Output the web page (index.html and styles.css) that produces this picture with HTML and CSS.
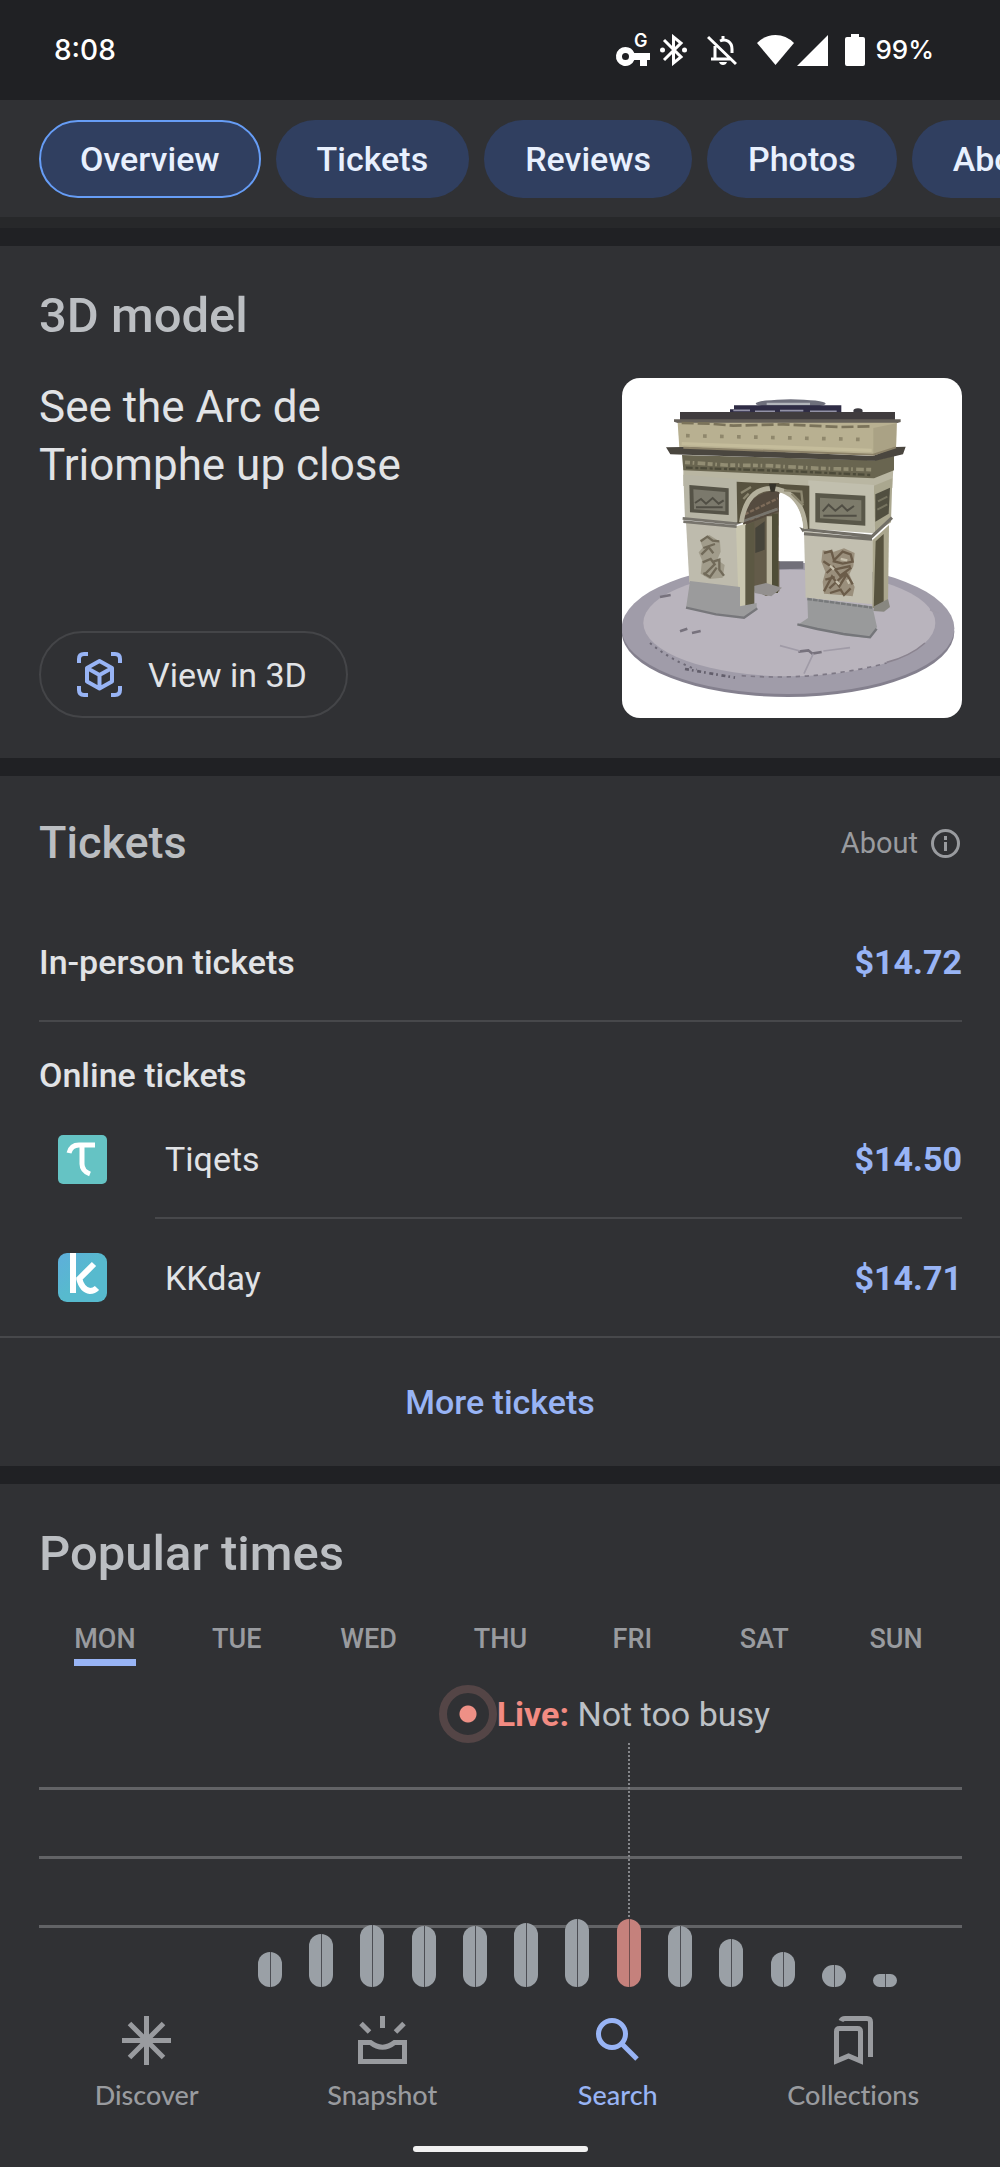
FILE: index.html
```html
<!DOCTYPE html>
<html lang="en">
<head>
    <meta charset="UTF-8">
    <meta name="viewport" content="width=device-width, initial-scale=1.0">
    <title>Arc de Triomphe</title>
    <link rel="stylesheet" href="styles.css">
</head>
<body>

    <header class="status-bar">
        <span class="clock">8:08</span>
        <div class="status-icons">
            <div class="status-group">
                <svg class="key-icon" width="34" height="32" viewBox="0 0 34 32" fill="#fff">
                    <path fill-rule="evenodd" d="M9.500 13a9.500 9.500 0 1 0 8.800 13H24v6h7v-6h3v-7H18.300A9.500 9.500 0 0 0 9.500 13zm0 6a3.500 3.500 0 1 1 0 7 3.500 3.500 0 0 1 0-7z"/>
                    <text x="18" y="13" class="key-letter">G</text>
                </svg>
                <svg width="27" height="32" viewBox="0 0 27 32" fill="none" stroke="#fff" stroke-width="3">
                    <path d="M4 6l17 17-7.500 6V3L21 9 4 26"/>
                    <circle cx="2.500" cy="16" r="2.500" fill="#fff" stroke="none"/>
                    <circle cx="24.500" cy="16" r="2.500" fill="#fff" stroke="none"/>
                </svg>
            </div>
            <svg width="30" height="32" viewBox="0 0 30 32" fill="none" stroke="#fff" stroke-width="3">
                <path d="M1 3l28 27M4 25h20M8 24V12M13 7c6-3 12 1 12 8v4M16 2v4"/>
                <path d="M12 28h8q-1 3-4 3t-4-3z" fill="#fff" stroke="none"/>
            </svg>
            <div class="status-group signal">
                <svg width="37" height="32" viewBox="0 0 37 32" fill="#fff">
                    <path d="M18.500 31L0 9Q8 1 18.500 1T37 9z"/>
                </svg>
                <svg width="31" height="32" viewBox="0 0 31 32" fill="#fff">
                    <path d="M31 1v31H0z"/>
                </svg>
            </div>
            <div class="status-group">
                <svg width="20" height="32" viewBox="0 0 20 32" fill="#fff">
                    <path d="M6 0h8v3h4q2 0 2 2v25q0 2-2 2H2q-2 0-2-2V5q0-2 2-2h4z"/>
                </svg>
                <span class="battery">99%</span>
            </div>
        </div>
    </header>

    <nav class="chips">
        <a href="#overview" class="chip active">Overview</a>
        <a href="#tickets" class="chip">Tickets</a>
        <a href="#reviews" class="chip">Reviews</a>
        <a href="#photos" class="chip">Photos</a>
        <a href="#about" class="chip">About</a>
    </nav>

    <main>
        <section class="card" id="overview">
            <h2>3D model</h2>
            <div class="model">
                <div class="model-info">
                    <p>See the Arc de Triomphe up close</p>
                    <button class="view-button">
                        <svg width="45" height="45" viewBox="0 0 45 45" fill="none" stroke="#98b4f5" stroke-width="4">
                            <path d="M2 11V7q0-5 5-5h4M34 2h4q5 0 5 5v4M43 34v4q0 5-5 5h-4M11 43H7q-5 0-5-5v-4"/>
                            <path d="M22.500 9l12.500 7v13.500l-12.500 7L10 29.500V16zM10 16l12.500 7L35 16M22.500 23v13" stroke-linejoin="round"/>
                        </svg>
                        View in 3D
                    </button>
                </div>
                <svg class="model-picture" viewBox="66 55 1020 1020" role="img" aria-label="Arc de Triomphe">
                    <!-- round base -->
                    <ellipse cx="564" cy="816" rx="499" ry="196" fill="#84808e"/>
                    <ellipse cx="564" cy="806" rx="499" ry="197" fill="#a09ca9"/>
                    <ellipse cx="568" cy="790" rx="438" ry="160" fill="#b9b4bd"/>
                    <path d="M150 850Q210 900 290 930" fill="none" stroke="#6d6976" stroke-width="6" stroke-dasharray="7 13"/>
                    <path d="M255 928l150 26" fill="none" stroke="#625e6b" stroke-width="8" stroke-dasharray="12 9 5 11"/>
                    <path d="M425 948Q650 965 860 910" fill="none" stroke="#7d7885" stroke-width="5" stroke-dasharray="13 14"/>
                    <path d="M860 908Q930 890 975 850" fill="none" stroke="#8b8490" stroke-width="5"/>
                    <path d="M240 815l22-8M276 820l26-6M180 712l32-6M595 876l30-4 12 10 28-5" stroke="#77727d" stroke-width="8" fill="none"/>
                    <path d="M640 882l-28 60M540 858l60 16M670 874l80-10M990 750l26 10" stroke="#a09ba7" stroke-width="5" fill="none"/>
                    <path d="M535 605h75v22l-75 2z" fill="#716f79"/>
                    <!-- roof -->
                    <ellipse cx="572" cy="132" rx="105" ry="13" fill="#6e6f7c"/>
                    <path d="M500 133h130" stroke="#b2b5bb" stroke-width="7"/>
                    <path d="M402 137h322v22H390v-10h12z" fill="#2f2c45"/>
                    <path d="M400 152h50M465 155h60M540 153h70M630 155h80" stroke="#9291a6" stroke-width="5"/>
                    <ellipse cx="774" cy="154" rx="14" ry="8" fill="#3c3a40"/>
                    <path d="M240 157h645v24H240z" fill="#403c3e"/>
                    <path d="M222 179h680v8l-12 4H235l-13-5z" fill="#66615a"/>
                    <!-- attic -->
                    <path d="M233 189h657l-2 78-68 20-582-22z" fill="#b8b091"/>
                    <path d="M820 205l70-14-2 76-68 20z" fill="#aaa285"/>
                    <path d="M245 190l85 2 70 6 150-4 170 8 100-2" fill="none" stroke="#7b735a" stroke-width="8" stroke-dasharray="36 12"/>
                    <path d="M258 228l560 12" stroke="#8f876c" stroke-width="11" stroke-dasharray="11 40"/>
                    <path d="M245 252l570 20" stroke="#c4bc9b" stroke-width="10"/>
                    <!-- main wall -->
                    <path d="M250 325l572 26 58-26-3 60-55 34-572-40z" fill="#b9b6a2"/>
                    <!-- cornice and frieze -->
                    <path d="M246 286l578 16 58-14v44l-60 24-572-24z" fill="#696550"/>
                    <path d="M255 308l120 8 130 2 150 8 160 4" fill="none" stroke="#928d73" stroke-width="11" stroke-dasharray="15 8 5 10 23 7"/>
                    <path d="M258 324l300 10 255 12" fill="none" stroke="#4c4a39" stroke-width="7" stroke-dasharray="20 8 9 6"/>
                    <path d="M198 263l50-1 180 9 390 18 70-27 29-1-8 23-82 19-386-12-230-7z" fill="#4a463f"/>
                    <path d="M250 264l570 21 68-22" fill="none" stroke="#8b8168" stroke-width="6"/>
                    <!-- inside of the arch -->
                    <path d="M410 370h128v325l-40 14-38-20z" fill="#635b49"/>
                    <path d="M428 480Q438 400 538 390v65l-106 42z" fill="#554b3f"/>
                    <path d="M434 464l100-48M450 480l85-34" stroke="#7d6b59" stroke-width="7" stroke-dasharray="13 5"/>
                    <path d="M500 470h16v228h-16z" fill="#b9b49e"/>
                    <path d="M516 462h18v238h-18z" fill="#4f4d37"/>
                    <path d="M466 505l28-20v85l-28 10z" fill="#46443a"/>
                    <path d="M458 680l40-10 48 14-32 26-50-10z" fill="#93908f"/>
                    <!-- left pier -->
                    <path d="M250 345l163 14v131l-158-10z" fill="#b7b5a5"/>
                    <path d="M258 486l172 18v238l-162-74z" fill="#bebbad"/>
                    <path d="M408 500l30-8v248h-22z" fill="#cac7b0"/>
                    <path d="M436 497l27-10v258h-27z" fill="#5c5843"/>
                    <path d="M270 664l150 18v58l50-10v22l-32 21-90-9-90-18z" fill="#9b9b9c"/>
                    <path d="M258 744l90 20 84 10 40-28" fill="none" stroke="#77777b" stroke-width="7"/>
                    <path d="M248 476l160 16 125-44M250 486l160 15" fill="none" stroke="#77746c" stroke-width="8"/>
                    <path d="M268 376l118 10v80l-116-8z" fill="#555347"/>
                    <path d="M280 389l96 8v58l-94-6z" fill="#7b796c"/>
                    <path d="M285 430l18-12 15 14 20-17 18 17 15-10M288 443h80" fill="none" stroke="#504e44" stroke-width="6"/>
                    <path d="M300 540l28-14 32 20 2 30-10 24 22 16-6 38-40 4-26-16 4-40-10-24 12-14z" fill="#a19c8b"/>
                    <path d="M302 545l20-14 16 12 20 2M310 565l35-12M304 585l22-22 14 18M308 608l24-10 12 16-32 32M340 606l18-6v30l14 18M310 640l20 12 20-28" fill="none" stroke="#716a59" stroke-width="7"/>
                    <!-- right pier -->
                    <path d="M625 362l197 14v145l-200-14z" fill="#c1bfae"/>
                    <path d="M822 378l55-22-4 132-50 33z" fill="#aaa78f"/>
                    <path d="M612 514l205 24v196l-200-20z" fill="#c2bfb0"/>
                    <path d="M817 542l50-46-3 240-47 10z" fill="#aaa68d"/>
                    <path d="M827 545l24-22v214l-30 8z" fill="#57533f"/>
                    <path d="M822 740l42-22 6 24-18 14-32-2z" fill="#888780"/>
                    <path d="M622 714l195 26 14 62-22 33-65-6-150-34 30-20z" fill="#999a9b"/>
                    <path d="M592 794l60 14 78 15 80 10 20-26" fill="none" stroke="#75767a" stroke-width="7"/>
                    <path d="M622 718l195 26" stroke="#77797b" stroke-width="7" stroke-dasharray="14 3"/>
                    <path d="M598 508l218 22 60-56M612 522l204 17" fill="none" stroke="#726f67" stroke-width="9"/>
                    <path d="M646 400l150 8v90l-150-10z" fill="#595749"/>
                    <path d="M660 414l124 8v62l-124-8z" fill="#7d7b6b"/>
                    <path d="M668 455l18-20 20 18 20-16 16 16 20-14M670 468h100" fill="none" stroke="#504e44" stroke-width="6"/>
                    <path d="M826 404l44-20-4 78-40 24z" fill="#514f40"/>
                    <path d="M834 425l28-14M832 450l30-16" stroke="#777460" stroke-width="6"/>
                    <path d="M668 572l34 4 30-10 32 14-4 40-12 24 16 38-6 28-36-4-50-4-4-36 8-30-12-30z" fill="#9a8f7c"/>
                    <path d="M672 580l22-6 8 28 26-26 24 8 6 22-30 6-30-8M670 605l36 24 46-10M680 640l20-18 20 26 34-24M676 660l28-8M672 695l24-45 22 30 22-36 18 30M690 700l32-10 10 16 20-20M738 640l-50 46" fill="none" stroke="#6b5c49" stroke-width="7"/>
                    <path d="M690 618l12 12M722 598l20 4M708 664l10 10M742 660l6 12" stroke="#c7c0ad" stroke-width="7"/>
                    <!-- arch ring -->
                    <path d="M410 366l218 12v130h-16Q608 400 520 390 440 390 422 490h-10z" fill="#57523f"/>
                    <path d="M424 488Q440 384 518 386 608 396 617 508" fill="none" stroke="#b4b09c" stroke-width="14"/>
                    <path d="M423 400l30-18M552 392l52 4 4 35M430 418l16-16M575 402l35 35" stroke="#8c8770" stroke-width="7" fill="none"/>
                    <path d="M537 403Q598 415 609 500v104h-73z" fill="#fff"/>
                    <path d="M507 372h22l-5 24h-12z" fill="#36332a"/>
                    <path d="M598 502l20 8-10 8z" fill="#706d65"/>
                </svg>
            </div>
        </section>

        <section class="card" id="tickets">
            <div class="tickets-header">
                <h2>Tickets</h2>
                <a href="#about" class="about-link">
                    About
                    <svg width="29" height="29" viewBox="0 0 29 29" fill="none" stroke="currentColor" stroke-width="3">
                        <circle cx="14.500" cy="14.500" r="13"/>
                        <path d="M14.500 13v9M14.500 7v4"/>
                    </svg>
                </a>
            </div>
            <a href="#in-person" class="ticket-row in-person">
                <span class="ticket-type">In-person tickets</span>
                <span class="price">$14.72</span>
            </a>
            <h3>Online tickets</h3>
            <a href="#tiqets" class="ticket-row">
                <svg class="logo" width="49" height="49" viewBox="0 0 49 49">
                    <rect width="49" height="49" rx="5" fill="#65c3c4"/>
                    <path d="M11 18q2-8 10-8h16M24 10v19q0 7 8 10" fill="none" stroke="#fff" stroke-width="5"/>
                </svg>
                <span class="seller divided">Tiqets <span class="price">$14.50</span></span>
            </a>
            <a href="#kkday" class="ticket-row">
                <svg class="logo" width="49" height="49" viewBox="0 0 49 49">
                    <defs>
                        <linearGradient id="kkday-fill" x1="0" y1="0" x2="1" y2="1">
                            <stop offset="0" stop-color="#5eaedb"/>
                            <stop offset="0.500" stop-color="#57bace"/>
                        </linearGradient>
                    </defs>
                    <rect width="49" height="49" rx="9" fill="url(#kkday-fill)"/>
                    <path d="M15 0v40" stroke="#fff" stroke-width="6"/>
                    <path d="M36 11L20 27M21 25q3 12 11 13 4 0 7-3" fill="none" stroke="#fff" stroke-width="6"/>
                </svg>
                <span class="seller">KKday <span class="price">$14.71</span></span>
            </a>
            <a href="#more-tickets" class="more-tickets">More tickets</a>
        </section>

        <section class="card popular">
            <h2>Popular times</h2>
            <div class="days">
                <button class="day selected">MON</button>
                <button class="day">TUE</button>
                <button class="day">WED</button>
                <button class="day">THU</button>
                <button class="day">FRI</button>
                <button class="day">SAT</button>
                <button class="day">SUN</button>
            </div>
            <p class="live">
                <span class="live-dot"></span>
                <span><strong>Live:</strong> Not too busy</span>
            </p>
            <div class="chart" id="chart"></div>
        </section>
    </main>

    <footer class="bottom">
        <nav class="bottom-nav">
            <a href="#discover" class="nav-item">
                <svg width="49" height="49" viewBox="0 0 49 49" fill="none" stroke="currentColor" stroke-width="5">
                    <path d="M24.500 0v49M0 24.500h49M7.500 7.500l34 34M41.500 7.500l-34 34"/>
                </svg>
                Discover
            </a>
            <a href="#snapshot" class="nav-item">
                <svg width="49" height="49" viewBox="0 0 49 49" fill="none" stroke="currentColor" stroke-width="5">
                    <path d="M24.500 0v12M3 7.500l8.500 8.500M46 7.500L37.500 16M2.500 26.500h10q12 9.500 24 0h10v19h-44z"/>
                </svg>
                Snapshot
            </a>
            <a href="#search" class="nav-item current">
                <svg width="49" height="49" viewBox="0 0 49 49" fill="none" stroke="currentColor" stroke-width="5">
                    <circle cx="19" cy="18" r="13.500"/>
                    <path d="M28 27l16 16"/>
                </svg>
                Search
            </a>
            <a href="#collections" class="nav-item">
                <svg width="49" height="49" viewBox="0 0 49 49" fill="none" stroke="currentColor" stroke-width="5">
                    <path d="M7.500 45V15.500q0-3 3-3h18q3 0 3 3V45l-12-5z"/>
                    <path d="M12 5q1-2.500 4-2.500h22q3.500 0 3.500 3.500v35"/>
                </svg>
                Collections
            </a>
        </nav>
        <div class="home-bar"></div>
    </footer>

    <script>
        // Busyness per hour, 0 = closed
        const hours = [0, 0, 0, 0, 35, 53, 62, 61, 61, 64, 68, 68, 61, 48, 35, 22, 13, 0];
        const liveHour = 11;

        const chart = document.getElementById("chart");
        hours.forEach((value, index) => {
            let live = index === liveHour ? " live-hour" : "";
            chart.innerHTML += `<div class="hour${live}"><div class="bar" style="height: ${value}px"></div></div>`;
        });
    </script>

</body>
</html>
```
FILE: styles.css
```css
* {
    box-sizing: border-box;
}
body {
    display: flex;
    flex-direction: column;
    min-height: 100vh;
    margin: 0;
    background-color: #202124;
    color: #e1e3e6;
    font-family: Roboto, sans-serif;
    font-size: 34px;
    line-height: 44px;
}
svg {
    display: block;
    flex-shrink: 0;
}
a {
    color: inherit;
    text-decoration: none;
}
button {
    background: none;
    border: none;
    color: inherit;
    font: inherit;
}
h2, h3, p {
    margin: 0;
}
h2 {
    color: #bbbec2;
    font-size: 49px;
    font-weight: 500;
    line-height: 56px;
}
h3 {
    padding: 31px 0 3px;
    font-size: 34px;
    font-weight: 500;
}

/* Status bar */
.status-bar {
    display: flex;
    align-items: center;
    justify-content: space-between;
    height: 100px;
    padding: 0 66px 0 54px;
    color: #fff;
    font-family: Inter, sans-serif;
    font-size: 28px;
    font-weight: 500;
}
.status-icons {
    display: flex;
    align-items: center;
    gap: 20px;
}
.status-group {
    display: flex;
    align-items: center;
    gap: 10px;
}
.signal {
    gap: 3px;
    margin-right: -3px;
}
.key-icon {
    overflow: visible;
}
.key-letter {
    font-size: 18px;
    font-weight: 600;
}
.battery {
    font-size: 26px;
}

/* Chips */
.chips {
    display: flex;
    gap: 15px;
    overflow: hidden;
    padding: 20px 0 19px 39px;
    background-color: #303134;
    border-bottom: 11px solid #27282a;
}
.chip {
    padding: 15px 39px;
    border: 2px solid transparent;
    border-radius: 39px;
    background-color: #303f60;
    color: #e8f0fe;
    font-weight: 500;
}
.chip.active {
    border-color: #669df6;
}

/* Cards */
.card {
    margin-top: 18px;
    padding: 42px 38px 0 39px;
    background-color: #303134;
}
.model {
    display: flex;
    justify-content: space-between;
    padding: 34px 0 40px;
}
.model-info {
    display: flex;
    flex-direction: column;
    align-items: flex-start;
    justify-content: space-between;
    width: 420px;
    font-size: 44px;
    line-height: 58px;
}
.view-button {
    display: flex;
    align-items: center;
    gap: 26px;
    height: 87px;
    padding: 0 39px 0 36px;
    border: 2px solid #444548;
    border-radius: 44px;
    font-size: 34px;
}
.model-picture {
    width: 340px;
    height: 340px;
    border-radius: 18px;
    background-color: #fff;
}

/* Tickets */
.tickets-header {
    display: flex;
    align-items: center;
    justify-content: space-between;
    margin-bottom: 35px;
}
.tickets-header h2 {
    font-size: 45px;
    line-height: 50px;
}
.about-link {
    display: flex;
    align-items: center;
    gap: 13px;
    padding-right: 2px;
    color: #999b9f;
    font-size: 29px;
}
.ticket-row {
    display: flex;
    align-items: center;
}
.in-person {
    justify-content: space-between;
    height: 119px;
    border-bottom: 2px solid #47484b;
}
.ticket-type {
    font-weight: 500;
}
.logo {
    margin: 0 48px 0 19px;
}
.seller {
    display: flex;
    align-items: center;
    justify-content: space-between;
    flex: 1;
    height: 117px;
    padding-left: 10px;
}
.divided {
    height: 119px;
    border-bottom: 2px solid #47484b;
}
.price {
    color: #98b4f5;
    font-weight: 700;
}
.more-tickets {
    display: block;
    margin: 0 -38px 0 -39px;
    padding: 42px;
    border-top: 2px solid #47484b;
    color: #98b4f5;
    font-weight: 500;
    text-align: center;
}

/* Popular times */
.popular {
    padding-bottom: 4px;
}
.days {
    display: grid;
    grid-template-columns: repeat(7, 1fr);
    justify-items: center;
    margin-top: 37px;
}
.day {
    padding: 0;
    border-bottom: 7px solid transparent;
    color: #999b9f;
    font-size: 27px;
    font-weight: 500;
    line-height: 40px;
}
.day.selected {
    border-color: #98b4f5;
}
.live {
    display: flex;
    align-items: center;
    margin: 19px 0 0 43.3%;
    color: #bdc1c6;
}
.live strong {
    color: #f28b82;
}
.live-dot {
    width: 58px;
    height: 58px;
    border: 8px solid #544546;
    border-radius: 50%;
    background: radial-gradient(circle, #ee9086 8px, transparent 9px);
}
.chart {
    display: flex;
    height: 244px;
    background: repeating-linear-gradient(#626366 0 3px, transparent 3px 69px) 0 44px / 100% 200px no-repeat;
}
.hour {
    display: flex;
    flex: 1;
    flex-direction: column;
    align-items: center;
    justify-content: flex-end;
}
.bar {
    width: 24px;
    border-radius: 12px;
    background: linear-gradient(90deg, #9aa0a6 12px, #4c4e54 12px 13px, #9aa0a6 13px);
}
.live-hour::before {
    content: "";
    flex: 1;
    width: 2px;
    background: repeating-linear-gradient(#85868a 0 2px, transparent 2px 4px);
}
.live-hour .bar {
    background: linear-gradient(90deg, #c5817c 12px, #704e4d 12px 13px, #c5817c 13px);
}

/* Bottom navigation */
.bottom {
    flex: 1;
    padding: 25px 29px 15px;
    background-color: #303134;
}
.bottom-nav {
    display: grid;
    grid-template-columns: repeat(4, 1fr);
}
.nav-item {
    display: flex;
    flex-direction: column;
    align-items: center;
    gap: 14px;
    color: #999b9f;
    font-family: Lato, sans-serif;
    font-size: 27px;
    font-weight: 500;
    font-variant-ligatures: none;
    line-height: 32px;
}
.nav-item.current {
    color: #98b4f5;
}
.home-bar {
    width: 175px;
    height: 6px;
    margin: 35px auto 0;
    border-radius: 3px;
    background-color: #f1f1f1;
}
```
